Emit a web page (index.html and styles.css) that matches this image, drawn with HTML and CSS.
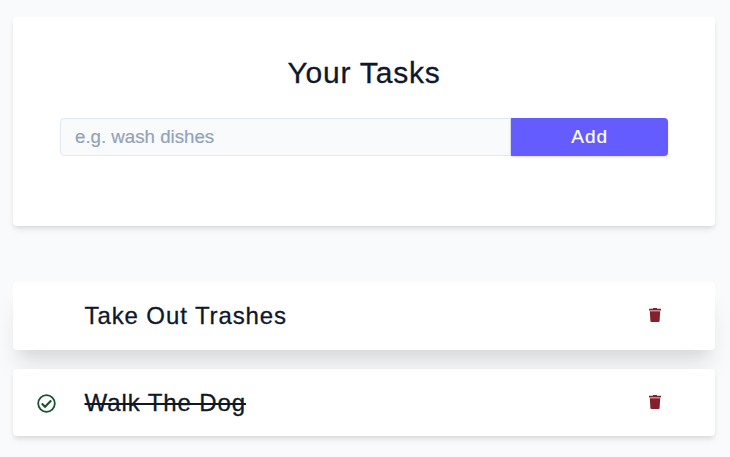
FILE: index.html
```html
<!DOCTYPE html>
<html lang="en">
<head>
<meta charset="utf-8">
<title>Your Tasks</title>
<link rel="stylesheet" href="styles.css">
</head>
<body>
<main class="app">
  <form class="task-form">
    <h1 class="title">Your Tasks</h1>
    <div class="form-control">
      <input class="task-input" type="text" placeholder="e.g. wash dishes">
      <button class="add-btn" type="button">Add</button>
    </div>
  </form>
  <ul class="tasks">
    <li class="task task-hover">
      <span class="check"></span>
      <span class="name">Take Out Trashes</span>
      <svg class="trash" viewBox="0 0 12 14" preserveAspectRatio="none"><path d="M0 .7h4V0h4v.7h4v1.900H0zM.8 3.300h10.400l-.6 9.700Q10.500 14 9.600 14H2.400Q1.500 14 1.400 13z"/></svg>
    </li>
    <li class="task">
      <svg class="check" viewBox="0 0 512 512"><path d="M256 8a248 248 0 1 0 0 496 248 248 0 0 0 0-496zm0 48a200 200 0 1 1 0 400 200 200 0 0 1 0-400m140 130-22-22a12 12 0 0 0-17 0L216 304l-60-60a12 12 0 0 0-17 0l-22 23a12 12 0 0 0 0 17l90 91a12 12 0 0 0 17 0l172-171a12 12 0 0 0 0-18z"/></svg>
      <span class="name done">Walk The Dog</span>
      <svg class="trash" viewBox="0 0 12 14" preserveAspectRatio="none"><path d="M0 .7h4V0h4v.7h4v1.900H0zM.8 3.300h10.400l-.6 9.700Q10.500 14 9.600 14H2.400Q1.500 14 1.400 13z"/></svg>
    </li>
  </ul>
</main>
</body>
</html>
```
FILE: styles.css
```css
* { box-sizing: border-box; margin: 0; padding: 0; }
body {
  min-height: 100vh;
  background: #f8fafc;
  color: #0f172a;
  font-family: "Liberation Sans", Arial, sans-serif;
}
.app { min-height: 100vh; padding: 17px 15px 0 13px; }
.task-form {
  height: 209px;
  padding: 37px 47px 0;
  background: #fff;
  border-radius: 4px;
  box-shadow: 0 4px 6px -1px rgba(0,0,0,.1), 0 2px 4px -1px rgba(0,0,0,.06);
}
.title {
  font-size: 30px;
  line-height: 38px;
  font-weight: 400;
  letter-spacing: .8px;
  text-align: center;
  -webkit-text-stroke: .3px;
}
.form-control { display: grid; grid-template-columns: 1fr 156.600px; margin-top: 26px; height: 38px; }
.task-input {
  min-width: 0;
  padding: 0 14px;
  background: #f8fafc;
  border: 1px solid #e2e8f0;
  border-radius: 4px 0 0 4px;
  font: 18.700px "Liberation Sans", Arial, sans-serif;
}
.task-input::placeholder { color: #94a3b8; opacity: 1; -webkit-text-stroke: .2px; }
.add-btn {
  background: #645cff;
  color: #fff;
  border: 0;
  border-radius: 0 4px 4px 0;
  font: 19px "Liberation Sans", Arial, sans-serif;
  letter-spacing: 1px;
  -webkit-text-stroke: .2px;
  box-shadow: 0 1px 3px rgba(0,0,0,.1), 0 1px 2px rgba(0,0,0,.06);
}
.tasks { display: grid; gap: 19px; margin-top: 56px; list-style: none; }
.task {
  display: grid;
  grid-template-columns: 20px 1fr 12px;
  column-gap: 28.500px;
  align-items: center;
  height: 67.400px;
  padding: 0 54px 0 23px;
  background: #fff;
  border-radius: 4px;
  box-shadow: 0 4px 6px -1px rgba(0,0,0,.1), 0 2px 4px -1px rgba(0,0,0,.06);
}
.task-hover { height: 68px; box-shadow: 0 20px 25px -5px rgba(0,0,0,.1), 0 10px 10px -5px rgba(0,0,0,.04); }
.name { justify-self: start; font-size: 24px; letter-spacing: .9px; -webkit-text-stroke: .3px; }
.done { padding-top: 1px; text-decoration: line-through; text-decoration-thickness: 2px; }
.check { justify-self: center; width: 19px; height: 19px; margin-top: 1px; fill: #14532d; }
.trash { width: 12px; height: 14px; margin-bottom: 2px; fill: #842029; }
```
